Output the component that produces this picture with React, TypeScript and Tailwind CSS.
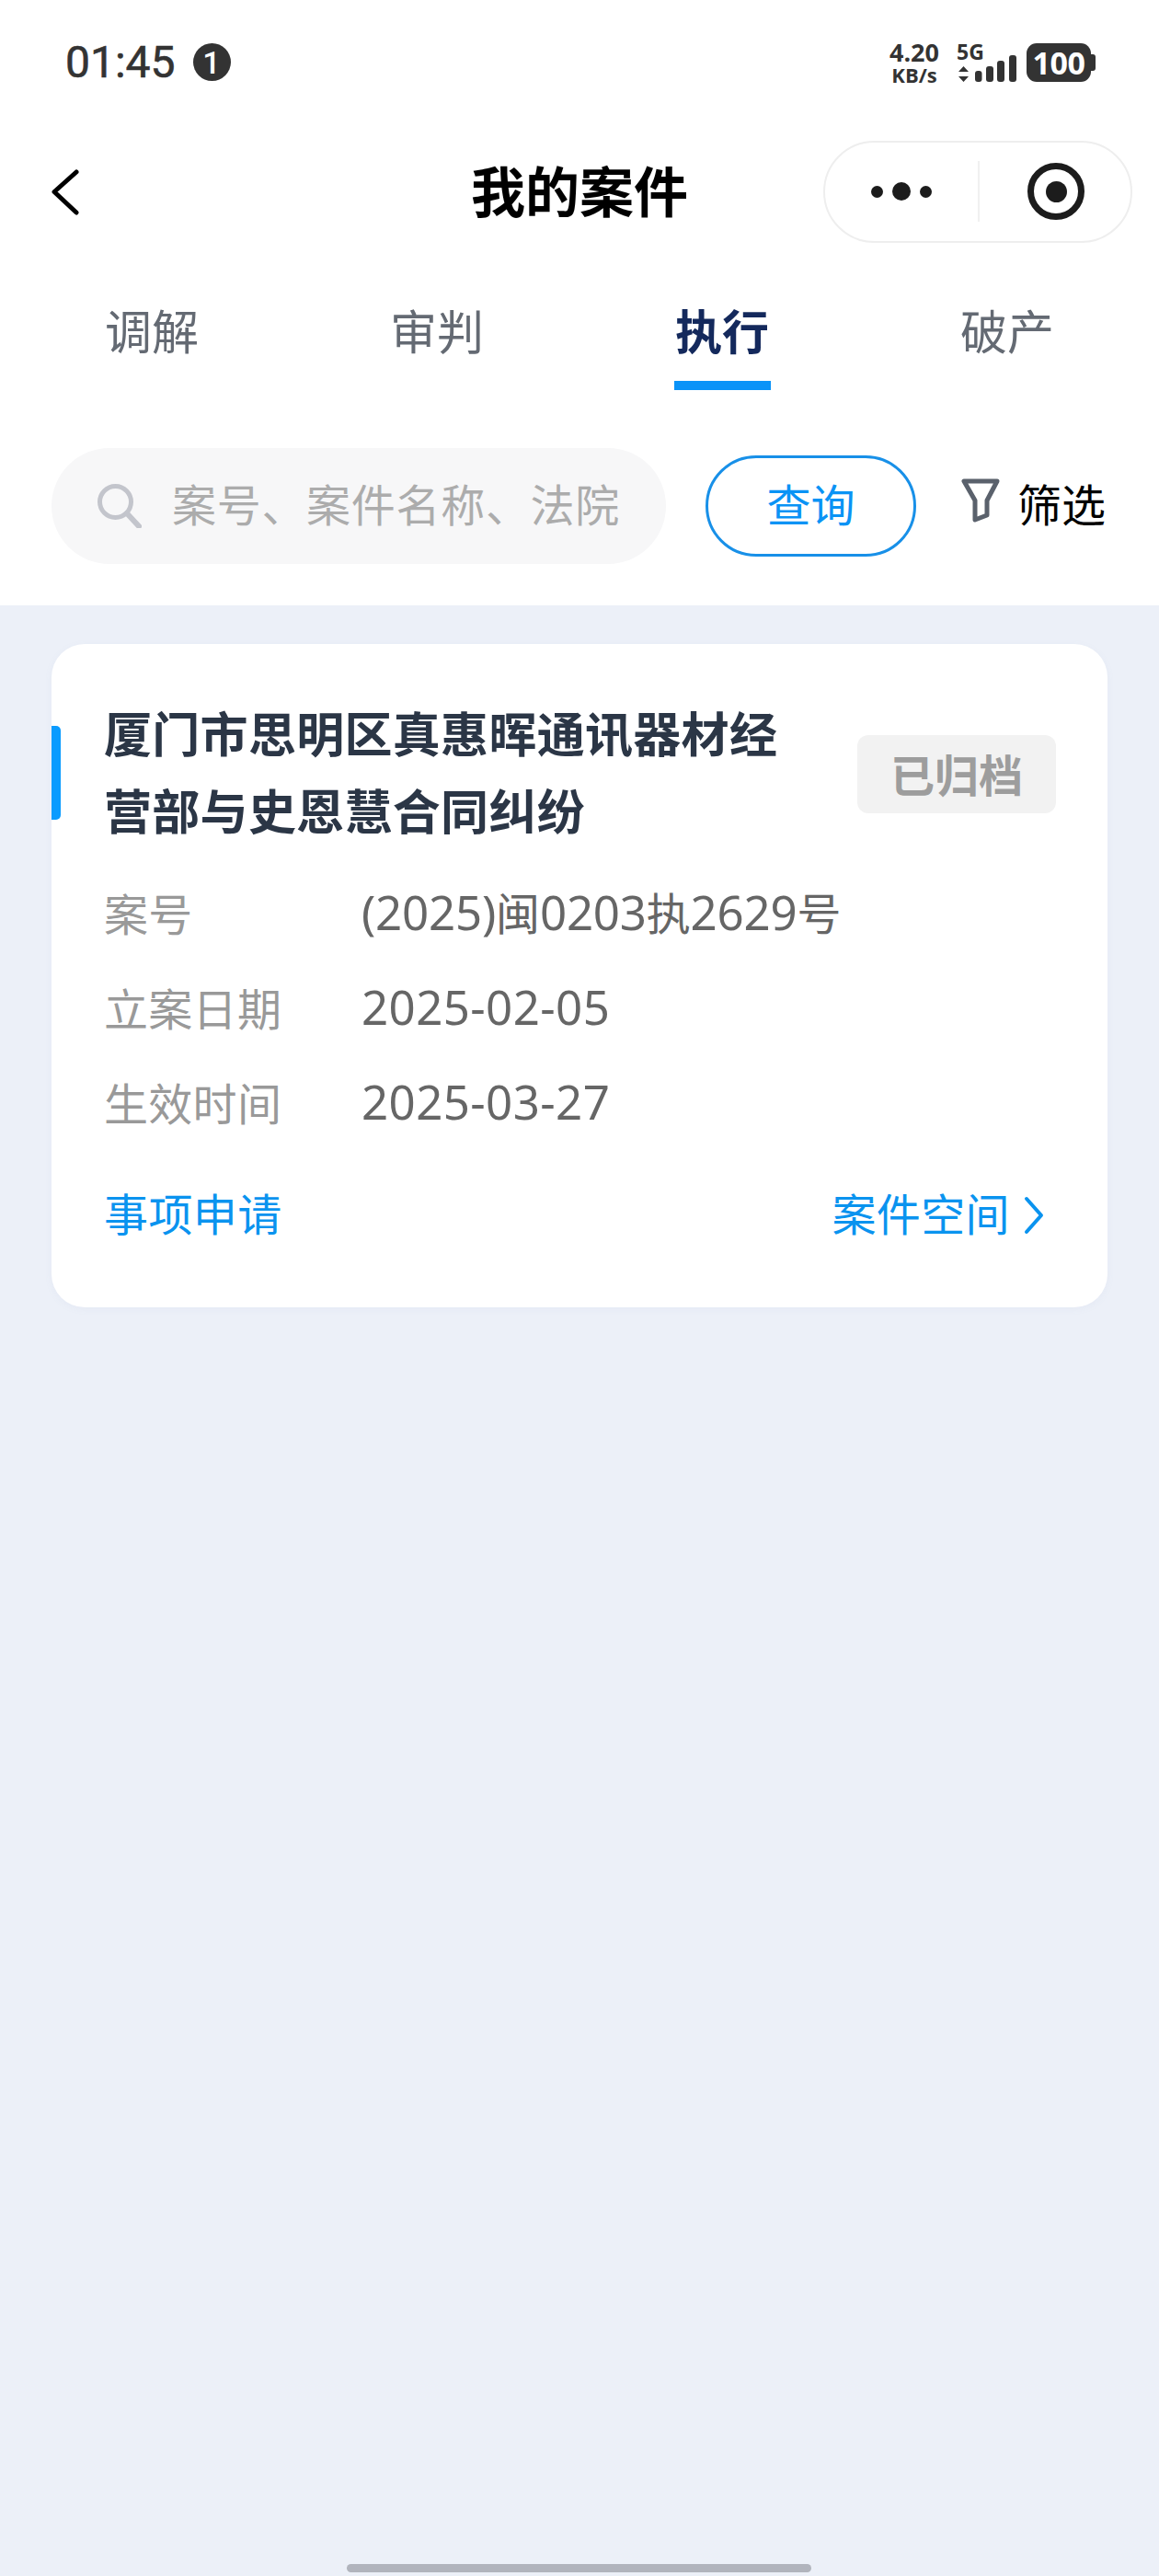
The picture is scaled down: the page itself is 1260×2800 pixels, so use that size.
import React from "react";

function StatusBar() {
  return (
    <div className="h-[135px] flex items-center justify-between pl-[71px] pr-[69px] text-[#333]">
      <div className="flex items-center gap-[19px]">
        <span className="text-[48px] leading-none font-normal font-['Roboto',sans-serif] [-webkit-text-stroke:0.6px_#333]">01:45</span>
        <span className="w-[41px] h-[41px] rounded-full bg-[#333] text-white text-[34px] leading-none font-medium font-['Roboto',sans-serif] flex items-center justify-center">1</span>
      </div>
      <div className="flex items-center">
        <div className="w-[56px] flex flex-col items-center font-['Open_Sans',sans-serif] font-bold">
          <span className="text-[27px] leading-[26px]">4.20</span>
          <span className="text-[22px] leading-[22px]">KB/s</span>
        </div>
        <div className="ml-[19px] w-[66px] h-[42px] relative">
          <span className="absolute left-[-1px] top-[-3px] text-[23px] leading-[24px] font-bold font-['Open_Sans',sans-serif]">5G</span>
          <svg className="absolute left-0 top-0" width="66" height="42" viewBox="0 0 66 42">
            <path d="M6.500 25 L12 31 H1 Z M6.500 42 L12 36 H1 Z" fill="#333" />
            <rect x="19" y="30" width="7.500" height="12" rx="3" fill="#333" />
            <rect x="31" y="25" width="8" height="17" rx="3" fill="#333" />
            <rect x="43" y="19" width="8" height="23" rx="3" fill="#333" />
            <rect x="56" y="13" width="8" height="29" rx="3" fill="#333" />
          </svg>
        </div>
        <div className="ml-[9px] flex items-center">
          <div className="w-[70px] h-[42px] rounded-[11px] bg-[#333] text-white flex items-center justify-center text-[34px] leading-none font-bold font-['Open_Sans',sans-serif] tracking-[-0.5px]">100</div>
          <div className="w-[5px] h-[18px] rounded-r-[3px] bg-[#333]" />
        </div>
      </div>
    </div>
  );
}

function NavBar() {
  return (
    <div className="h-[146px] grid grid-cols-[1fr_auto_1fr] items-center px-[29px]">
      <svg width="30" height="50" viewBox="0 0 30 50" fill="none" className="block ml-[27px] mt-[2px]">
        <path d="M27 3 L3 24.500 L27 47" stroke="#000" strokeWidth="5" strokeLinecap="round" strokeLinejoin="round" />
      </svg>
      <div className="text-[59px] leading-[70px] font-bold text-black pb-[5px]">我的案件</div>
      <div className="justify-self-end w-[336px] h-[111px] rounded-full border-2 border-[#eeeeee] flex items-center">
        <div className="w-[166px] flex items-center justify-center gap-[10px]">
          <span className="w-[13px] h-[13px] rounded-full bg-[#1c1c1c]" />
          <span className="w-[20px] h-[20px] rounded-full bg-[#1c1c1c]" />
          <span className="w-[13px] h-[13px] rounded-full bg-[#1c1c1c]" />
        </div>
        <div className="w-[2px] h-[66px] bg-[#f0f0f0]" />
        <div className="flex-1 flex items-center justify-center pl-[2px]">
          <span className="w-[62px] h-[62px] rounded-full border-[7px] border-[#1c1c1c] flex items-center justify-center">
            <span className="w-[23px] h-[23px] rounded-full bg-[#1c1c1c]" />
          </span>
        </div>
      </div>
    </div>
  );
}

function Tabs() {
  const tabs = ["调解", "审判", "执行", "破产"];
  return (
    <div className="h-[143px] grid grid-cols-4 px-[10px]">
      {tabs.map((t) => {
        const active = t === "执行";
        return (
          <div key={t} className="flex flex-col items-center pt-[47px]">
            <span className={active ? "text-[51px] leading-[60px] font-bold text-[#14295c]" : "text-[51px] leading-[60px] text-[#646a73]"}>{t}</span>
            {active && <span className="mt-[26px] w-[105px] h-[10px] bg-[#0a93f8]" />}
          </div>
        );
      })}
    </div>
  );
}

function SearchRow() {
  return (
    <div className="flex items-center pt-[63px] pb-[45px] pl-[56px]">
      <div className="w-[668px] h-[126px] rounded-full bg-[#f7f7f8] flex items-center pl-[50px] overflow-hidden">
        <svg width="48" height="48" viewBox="0 0 48 48" fill="none" className="shrink-0">
          <circle cx="19.500" cy="19.500" r="17" stroke="#c3c5cc" strokeWidth="5" />
          <path d="M32 32 L45 46" stroke="#c3c5cc" strokeWidth="6" strokeLinecap="round" />
        </svg>
        <span className="ml-[33px] pb-[9px] text-[48px] leading-[60px] tracking-[0.7px] text-[#acacac] whitespace-nowrap">案号、案件名称、法院</span>
      </div>
      <div className="ml-[43px] w-[229px] h-[110px] pb-[8px] rounded-full border-[3px] border-[#1890e8] flex items-center justify-center text-[48px] leading-[60px] text-[#0a93f5]">查询</div>
      <svg width="44" height="48" viewBox="0 0 44 48" fill="none" className="ml-[48px] mb-[12px]">
        <path d="M4 3 H40 L29 24 V40 L16 45 V24 Z" stroke="#5a616c" strokeWidth="5" strokeLinejoin="round" />
      </svg>
      <span className="ml-[18px] pb-[9px] text-[48px] leading-[60px] text-black">筛选</span>
    </div>
  );
}

const cjk = "text-[48px] font-['Noto_Sans_CJK_SC',sans-serif]";

function Row({ label, tight, children }: { label: string; tight?: boolean; children: React.ReactNode }) {
  return (
    <div className="h-[103px] pb-[6px] flex items-center leading-[60px]">
      <span className="w-[280px] text-[48px] tracking-[0.3px] ml-[-1px] text-[#999999]">{label}</span>
      <span className={tight ? "text-[51px] tracking-[-0.2px] text-[#666666] font-['Noto_Sans',sans-serif]" : "text-[51px] tracking-[0.4px] text-[#666666] font-['Noto_Sans',sans-serif]"}>{children}</span>
    </div>
  );
}

function Card() {
  return (
    <div className="relative mt-[42px] mx-[56px] h-[721px] rounded-[36px] bg-white pt-[54px] pl-[58px] pr-[56px] shadow-[0_2px_8px_rgba(120,140,180,0.06)]">
      <span className="absolute left-0 top-[89px] w-[10px] h-[102px] rounded-r-[5px] bg-[#0a9bff]" />
      <div className="flex items-center justify-between">
        <div className="w-[745px] ml-[-1px] text-[52px] tracking-[0.3px] leading-[84px] font-bold text-[#2b3646]">厦门市思明区真惠晖通讯器材经营部与史恩慧合同纠纷</div>
        <div className="w-[216px] h-[85px] mt-[7px] pb-[4px] rounded-[12px] bg-[#f2f2f2] flex items-center justify-center text-[48px] leading-none font-bold text-[#9d9d9d]">已归档</div>
      </div>
      <div className="mt-[20px]">
        <Row label="案号" tight>
          (2025)<span className={cjk}>闽</span>0203<span className={cjk}>执</span>2629<span className={cjk}>号</span>
        </Row>
        <Row label="立案日期">2025-02-05</Row>
        <Row label="生效时间">2025-03-27</Row>
      </div>
      <div className="mt-[36px] pr-[12px] flex items-center justify-between text-[48px] tracking-[0.4px] leading-[60px] text-[#0a93ef]">
        <span className="ml-[-1px]">事项申请</span>
        <span className="flex items-center">
          案件空间
          <svg width="24" height="44" viewBox="0 0 24 44" fill="none" className="ml-[14px] mt-[8px]">
            <path d="M4 4 L20 22 L4 40" stroke="#0a93ef" strokeWidth="4" strokeLinecap="round" strokeLinejoin="round" />
          </svg>
        </span>
      </div>
    </div>
  );
}

export default function App() {
  return (
    <div className="relative w-[1260px] h-[2800px] overflow-hidden bg-[#ecf0f8] font-['Noto_Sans_CJK_SC',sans-serif]">
      <div className="bg-white">
        <StatusBar />
        <NavBar />
        <Tabs />
        <SearchRow />
      </div>
      <Card />
      <div className="absolute left-[377px] top-[2787px] w-[505px] h-[9px] rounded-full bg-[#b1b4bd]" />
    </div>
  );
}
